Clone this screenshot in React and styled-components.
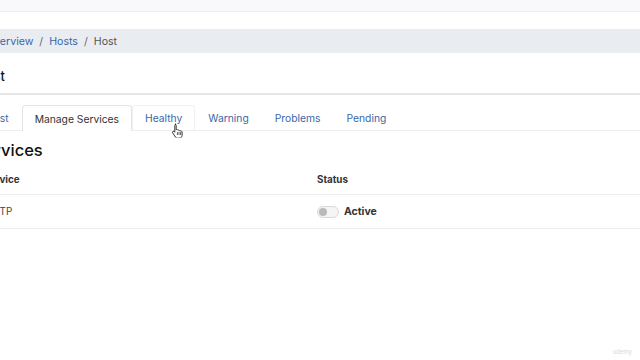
import React from 'react';
import styled, { createGlobalStyle } from 'styled-components';

const Global = createGlobalStyle`
  html, body { margin: 0; padding: 0; background: #fff; }
  body {
    width: 640px;
    height: 360px;
    overflow: hidden;
    font-family: Inter, "Liberation Sans", sans-serif;
    color: #222;
  }
`;

const Shell = styled.div`
  position: relative;
  width: 640px;
  height: 360px;
  overflow: hidden;
`;

const TopBar = styled.div`
  height: 11px;
  background: #f9f9fc;
  border-bottom: 1px solid #efeff2;
  margin-bottom: 17px;
`;

const Crumbs = styled.nav`
  display: flex;
  align-items: center;
  gap: 6px;
  height: 24px;
  background: #e9edf2;
  font-size: 10.6px;
  margin-left: -14px;
  width: calc(100% + 14px);
`;

const Crumb = styled.span`
  color: ${p => (p.link ? '#3a68a8' : '#555')};
`;

const Sep = styled.span`
  color: #666;
`;

const Page = styled.div`
  margin-left: -27px;
  width: calc(100% + 27px);
`;

const Title = styled.h1`
  margin: 0;
  height: 42px;
  padding-left: 3px;
  display: flex;
  align-items: center;
  padding-top: 6px;
  box-sizing: border-box;
  font-size: 13px;
  font-weight: 500;
  color: #111;
  border-bottom: 2px solid #e6e6e8;
`;

const Tabs = styled.div`
  display: flex;
  margin-top: 10px;
  height: 25px;
  border-bottom: 1px solid #eceef0;
`;

const Tab = styled.div`
  display: flex;
  align-items: center;
  padding: 0 12px;
  font-size: 10.3px;
  color: ${p => (p.active ? '#333' : '#3a68a8')};
  border: 1px solid ${p => (p.active ? '#e2e4e7' : p.hover ? '#f0f1f3' : 'transparent')};
  border-bottom: none;
  border-radius: 3px 3px 0 0;
  background: ${p => (p.active ? '#fff' : 'transparent')};
  margin-bottom: ${p => (p.active ? '-1px' : '0')};
`;

const Section = styled.h2`
  margin: 0;
  height: 34px;
  padding-top: 4px;
  box-sizing: border-box;
  padding-left: 1px;
  display: flex;
  align-items: center;
  font-size: 16.5px;
  font-weight: 500;
  color: #111;
`;

const Row = styled.div`
  display: grid;
  grid-template-columns: 344px 1fr;
  align-items: center;
  height: ${p => (p.head ? '29px' : '33px')};
  border-bottom: 1px solid #ececee;
  font-size: 9.8px;
  font-weight: ${p => (p.head ? 700 : 400)};
  color: ${p => (p.head ? '#333' : '#444')};
`;

const Cell = styled.div`
  display: flex;
  align-items: center;
  gap: 5px;
  padding-left: ${p => p.pad || 0}px;
`;

const Toggle = styled.span`
  position: relative;
  width: 20px;
  height: 10px;
  border: 1px solid #d9d9dc;
  border-radius: 6px;
  background: #f5f5f6;
  &::after {
    content: '';
    position: absolute;
    left: 1px;
    top: 1px;
    width: 8px;
    height: 8px;
    border-radius: 50%;
    background: #b9b9bd;
  }
`;

const Status = styled.span`
  font-weight: 700;
  font-size: 10.5px;
  color: #333;
`;

const Cursor = styled.svg`
  position: absolute;
  left: 171px;
  top: 123px;
`;

const Watermark = styled.div`
  position: absolute;
  right: 8px;
  bottom: 5px;
  font-size: 6px;
  color: #d8d8dc;
`;

export default function App() {
  return (
    <Shell>
      <Global />
      <TopBar />
      <Crumbs>
        <Crumb link>Overview</Crumb>
        <Sep>/</Sep>
        <Crumb link>Hosts</Crumb>
        <Sep>/</Sep>
        <Crumb>Host</Crumb>
      </Crumbs>
      <Page>
        <Title>Host</Title>
        <Tabs>
          <Tab>Host</Tab>
          <Tab active>Manage Services</Tab>
          <Tab hover>Healthy</Tab>
          <Tab>Warning</Tab>
          <Tab>Problems</Tab>
          <Tab>Pending</Tab>
        </Tabs>
        <Section>Services</Section>
        <Row head>
          <Cell pad={10}>Service</Cell>
          <Cell>Status</Cell>
        </Row>
        <Row>
          <Cell pad={13}>HTTP</Cell>
          <Cell>
            <Toggle />
            <Status>Active</Status>
          </Cell>
        </Row>
      </Page>
      <Cursor width="14" height="15" viewBox="0 0 14 15">
        <path
          d="M4 1.2c.7 0 1.2.5 1.2 1.2v4.3l.3-.1c.6-.2 1.2.1 1.4.6.5-.3 1.2-.1 1.5.4.5-.3 1.2 0 1.4.5.6-.2 1.3.2 1.3.9v3.3c0 1.6-1.2 2.9-2.8 2.9H6.6c-.9 0-1.6-.4-2.1-1.1L1.7 9.9c-.4-.5-.3-1.2.2-1.5.5-.3 1.1-.2 1.4.2l.5.6V2.4c0-.7.5-1.2 1.2-1.2z"
          fill="#fff"
          stroke="#222"
          strokeWidth="0.9"
          strokeLinejoin="round"
        />
        <path d="M6.4 9v3M8 9v3M9.6 9v3" stroke="#222" strokeWidth="0.7" />
      </Cursor>
      <Watermark>udemy</Watermark>
    </Shell>
  );
}
